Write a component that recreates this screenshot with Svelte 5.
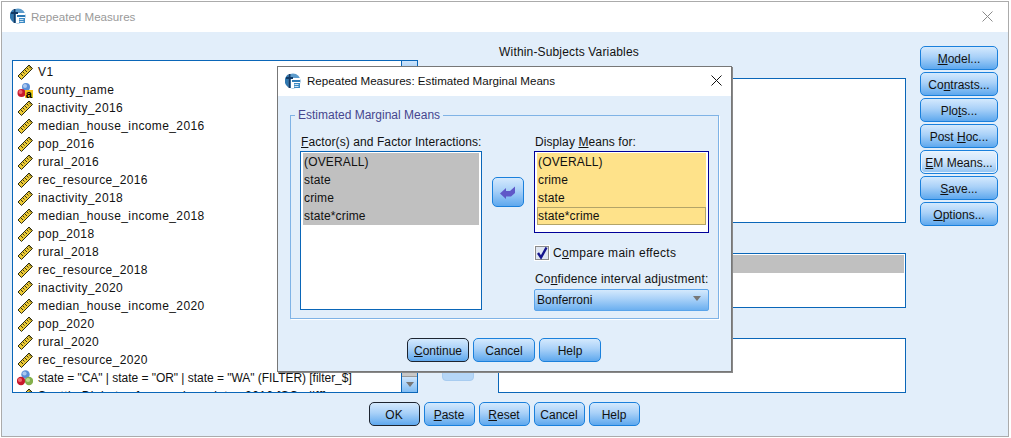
<script>
  const vars = [
    ["scale", "V1"],
    ["nominal", "county_name"],
    ["scale", "inactivity_2016"],
    ["scale", "median_house_income_2016"],
    ["scale", "pop_2016"],
    ["scale", "rural_2016"],
    ["scale", "rec_resource_2016"],
    ["scale", "inactivity_2018"],
    ["scale", "median_house_income_2018"],
    ["scale", "pop_2018"],
    ["scale", "rural_2018"],
    ["scale", "rec_resource_2018"],
    ["scale", "inactivity_2020"],
    ["scale", "median_house_income_2020"],
    ["scale", "pop_2020"],
    ["scale", "rural_2020"],
    ["scale", "rec_resource_2020"],
    ["filter", 'state = "CA" | state = "OR" | state = "WA" (FILTER) [filter_$]'],
    ["scale", "Seattle Diabetes from various dates 2016 [SC_diff]"]
  ];
  const side = [
    ["", "M", "odel..."],
    ["Co", "n", "trasts..."],
    ["Plo", "t", "s..."],
    ["Post ", "H", "oc..."],
    ["", "E", "M Means..."],
    ["", "S", "ave..."],
    ["", "O", "ptions..."]
  ];
</script>

{#snippet appIcon()}
  <svg class="ico" viewBox="0 0 16 16" width="16" height="16">
    <circle cx="8" cy="8" r="7.6" fill="#5d9ccc" />
    <path d="M3 1.600A7.600 7.600 0 0 0 3 14z" fill="#2f78b0" />
    <rect x="6" y="5" width="9" height="10" fill="#fff" />
    <rect x="7" y="7" width="8" height="2" fill="#2d7ab5" />
    <rect x="9" y="10" width="6" height="5" fill="#3c8ac4" />
    <path d="M9.500 11.500h4M9.500 13.500h4" stroke="#cfe4f4" />
    <path d="M4.500 1v14M1 5h7" stroke="#123a66" stroke-width="2" />
  </svg>
{/snippet}

{#snippet scale()}
  <svg class="ico" viewBox="0 0 16 16" width="16" height="16">
    <path d="M1 12L12 1l3.500 3.500-11 11z" fill="#ecc935" stroke="#2a2a10" />
    <path d="M4 10l2 2M6 8l1.500 1.500M8 6l2 2M10 4l1.500 1.500M12 2.500l2 2" stroke="#3a3410" />
  </svg>
{/snippet}

{#snippet ball(cx, cy, r, c, hi)}
  <circle {cx} {cy} {r} fill={c} />
  <circle cx={cx - 1} cy={cy - 1} r={r / 2} fill={hi} />
{/snippet}

{#snippet nominal()}
  <svg class="ico" viewBox="0 0 16 16" width="16" height="16">
    {@render ball(9, 5, 4, "#5b8fd8", "#a9c8f0")}
    {@render ball(4.500, 11, 4, "#c8182c", "#ee6a70")}
    <rect x="8" y="8" width="8" height="8" fill="#f2c21c" />
    <text x="12" y="15.500" class="badge">a</text>
  </svg>
{/snippet}

{#snippet filter()}
  <svg class="ico" viewBox="0 0 16 16" width="16" height="16">
    {@render ball(8.500, 4.500, 4.200, "#5b8fd8", "#a9c8f0")}
    {@render ball(4, 11, 4.200, "#c8182c", "#ee6a70")}
    {@render ball(12, 11, 4.200, "#84b04c", "#c0dc90")}
  </svg>
{/snippet}

{#snippet label(pre, key, post)}{pre}<u>{key}</u>{post}{/snippet}

<main class="win">
  <header class="title">
    {@render appIcon()}
    <span class="title-text">Repeated Measures</span>
    <svg class="close" viewBox="0 0 11 11" width="11" height="11"><path d="M.5.5l10 10M10.500.5l-10 10" stroke="#8a8a8a" fill="none" /></svg>
  </header>

  <div class="body">
    <div class="cols">
      <div class="varlist">
        <ul class="rows">
          {#each vars as [kind, name]}
            <li>
              {#if kind === "scale"}{@render scale()}{:else if kind === "nominal"}{@render nominal()}{:else}{@render filter()}{/if}
              <span class:tight={kind === "filter"}>{name}</span>
            </li>
          {/each}
        </ul>
        <div class="scroll">
          <div class="sb-btn"></div>
          <div class="sb-space"></div>
          <div class="sb-thumb"></div>
          <div class="sb-btn"><i class="tri"></i></div>
        </div>
      </div>

      <div class="move-col">
        <div class="move-off"></div>
      </div>

      <div class="boxes">
        <div class="heading">Within-Subjects Variables</div>
        <div class="box big"></div>
        <div class="box small"><div class="hl"></div></div>
        <div class="box small"></div>
      </div>

      <div class="side">
        {#each side as [a, b, c]}
          <button class="btn">{@render label(a, b, c)}</button>
        {/each}
      </div>
    </div>

    <div class="footer">
      <button class="btn wide def">OK</button>
      <button class="btn wide">{@render label("", "P", "aste")}</button>
      <button class="btn wide">{@render label("", "R", "eset")}</button>
      <button class="btn wide">Cancel</button>
      <button class="btn wide">Help</button>
    </div>
  </div>

  <section class="dlg">
    <header class="dlg-title">
      {@render appIcon()}
      <span>Repeated Measures: Estimated Marginal Means</span>
      <svg class="close" viewBox="0 0 11 11" width="11" height="11"><path d="M.5.5l10 10M10.500.5l-10 10" stroke="#111" fill="none" /></svg>
    </header>
    <div class="dlg-body">
      <fieldset class="group">
        <legend>Estimated Marginal Means</legend>
        <div class="left">
          <div class="cap">{@render label("", "F", "actor(s) and Factor Interactions:")}</div>
          <ul class="list factors">
            <li>(OVERALL)</li>
            <li>state</li>
            <li>crime</li>
            <li>state*crime</li>
          </ul>
        </div>
        <button class="move" aria-label="Move">
          <svg viewBox="0 0 16 15" width="16" height="15"><path d="M0 8.500L6 3v3h4l5-4.500V8l-4 3.500H6V14z" fill="#5f58c8" /></svg>
        </button>
        <div class="right">
          <div class="cap">{@render label("Display ", "M", "eans for:")}</div>
          <ul class="list means">
            <li>(OVERALL)</li>
            <li>crime</li>
            <li>state</li>
            <li class="cur">state*crime</li>
          </ul>
          <div class="check">
            <span class="cb">
              <svg viewBox="0 0 14 14" width="14" height="14"><path d="M3 7l3 4.500L11.500 1.500" fill="none" stroke="#14148c" stroke-width="2.400" /></svg>
            </span>
            <span class="check-text">{@render label("C", "o", "mpare main effects")}</span>
          </div>
          <div class="cap ci">{@render label("Co", "n", "fidence interval adjustment:")}</div>
          <div class="combo"><span>Bonferroni</span><i class="tri"></i></div>
        </div>
      </fieldset>
      <div class="dlg-actions">
        <button class="btn act def">{@render label("", "C", "ontinue")}</button>
        <button class="btn act">Cancel</button>
        <button class="btn act">Help</button>
      </div>
    </div>
  </section>
</main>

<style>
  :global(body) {
    background: #fff;
    font-family: "Liberation Sans", Arial, sans-serif;
    font-size: 12px;
    color: #111;
  }

  ul {
    list-style: none;
    margin: 0;
    padding: 0;
  }

  u {
    text-underline-offset: 1px;
  }

  .win {
    position: relative;
    box-sizing: border-box;
    width: 1008px;
    height: 436px;
    margin: 1px 0 0 1px;
    border: 1px solid #ababab;
    display: flex;
    flex-direction: column;
    overflow: hidden;
  }

  .title {
    box-sizing: border-box;
    height: 30px;
    flex: none;
    background: #fff;
    display: flex;
    align-items: center;
    padding: 0 15px 2px 8px;
    gap: 5px;
    color: #999;
    font-size: 11.6px;
  }

  .title-text {
    flex: 1;
  }

  .ico {
    flex: none;
    display: block;
  }

  .badge {
    font-size: 11px;
    font-weight: 700;
    text-anchor: middle;
    fill: #000;
    font-family: "Liberation Sans", sans-serif;
  }

  .body {
    flex: 1;
    background: #e2eefa;
    padding: 14px 10px 0;
  }

  .cols {
    display: flex;
    height: 347px;
  }

  .varlist {
    box-sizing: border-box;
    width: 406px;
    margin-top: 14px;
    height: 333px;
    border: 1.5px solid #0a66b8;
    background: #fff;
    display: flex;
    overflow: hidden;
  }

  .rows {
    flex: 1;
    min-width: 0;
    padding-left: 4px;
    margin-top: 1.5px;
  }

  .rows li {
    height: 18px;
    display: flex;
    align-items: center;
    gap: 5px;
    white-space: nowrap;
    overflow: hidden;
    letter-spacing: 0.38px;
  }

  .rows li .tight {
    letter-spacing: -0.03px;
  }

  .scroll {
    width: 15px;
    display: flex;
    flex-direction: column;
    border-left: 1px solid #0a66b8;
    background: #eef5fc;
  }

  .sb-btn {
    height: 15px;
    background: linear-gradient(#cfe5fb, #7fbcf4);
    display: flex;
    align-items: center;
    justify-content: center;
  }

  .sb-space {
    flex: 1;
  }

  .sb-thumb {
    height: 7px;
    background: #c8c8c8;
    border-bottom: 1px solid #999;
  }

  .tri {
    width: 0;
    height: 0;
    border: 4px solid transparent;
    border-top: 5px solid #777;
    border-bottom: 0;
  }

  .move-col {
    width: 80px;
    display: flex;
    justify-content: center;
    align-items: flex-end;
    padding-bottom: 12px;
    box-sizing: border-box;
  }

  .move-off {
    width: 32px;
    height: 30px;
    border-radius: 4px;
    background: #b5d6f7;
    border: 1px solid #a8ccf0;
    box-sizing: border-box;
  }

  .boxes {
    width: 408px;
    display: flex;
    flex-direction: column;
  }

  .heading {
    height: 12px;
    line-height: 12px;
    text-align: center;
    width: 142px;
    white-space: nowrap;
    letter-spacing: 0.16px;
  }

  .box {
    box-sizing: border-box;
    background: #fff;
    border: 1.5px solid #0a66b8;
    padding: 1px 1px;
  }

  .big {
    height: 146px;
    margin-top: 20px;
  }

  .small {
    height: 55px;
    margin-top: 30px;
  }

  .hl {
    height: 18px;
    background: #c0c0c0;
  }

  .side {
    width: 78px;
    margin-left: 14px;
    display: flex;
    flex-direction: column;
    gap: 2px;
  }

  .btn {
    box-sizing: border-box;
    height: 24px;
    padding: 1px 0 0;
    border: 1px solid #1a80dc;
    border-radius: 5px;
    background: linear-gradient(#d4e9fd, #a9d1f8 45%, #5ea8ee);
    font: inherit;
    color: #111;
    white-space: nowrap;
  }

  .side .btn:nth-child(5) {
    background: linear-gradient(#e6f2fe, #cfe4fa 50%, #8fc2f2);
    box-shadow: inset 0 0 0 1px #eaf4fe;
  }

  .def {
    border-color: #1c2430;
    border-width: 1.5px;
  }

  .footer {
    display: flex;
    justify-content: center;
    gap: 4px;
    margin: 9px 2px 0 0;
  }

  .wide {
    width: 51px;
  }

  .dlg {
    position: absolute;
    left: 275px;
    top: 64px;
    width: 455px;
    height: 306px;
    box-sizing: border-box;
    border: 1px solid #777;
    display: flex;
    flex-direction: column;
    box-shadow: 1px 1px 0 #888;
  }

  .dlg-title {
    box-sizing: border-box;
    height: 29px;
    flex: none;
    background: #fff;
    display: flex;
    align-items: center;
    gap: 6px;
    padding: 0 9px 2px 7px;
    color: #111;
    font-size: 11.6px;
  }

  .dlg-title span {
    flex: 1;
  }

  .dlg-body {
    flex: 1;
    background: #e2eefa;
    padding: 12px 13px 0 12px;
  }

  .group {
    box-sizing: border-box;
    height: 211px;
    margin: 0;
    padding: 13px 9px 0 9px;
    border: 1px solid #7fb3e6;
    box-shadow: 1px 1px 0 #fff;
    display: flex;
    align-items: flex-start;
  }

  legend {
    padding: 0 3px;
    margin-left: -5px;
    color: #46468e;
    line-height: 14px;
  }

  .left {
    width: 182px;
  }

  .right {
    width: 175px;
    margin-left: 10px;
  }

  .cap {
    height: 14px;
    line-height: 14px;
    margin: 0 0 2px 1px;
    white-space: nowrap;
    letter-spacing: 0.09px;
  }

  .list {
    box-sizing: border-box;
    background: #fff;
    padding: 1px 2px;
    letter-spacing: 0.15px;
  }

  .list li {
    height: 18px;
    line-height: 18px;
    padding-left: 1px;
  }

  .factors {
    height: 159px;
    border: 1.5px solid #0a66b8;
  }

  .factors li {
    background: #c0c0c0;
  }

  .means {
    height: 82px;
    border: 1.5px solid #000099;
  }

  .means li {
    background: #fee28a;
  }

  .means .cur {
    box-sizing: border-box;
    line-height: 16px;
    padding-left: 0;
    border: 1px solid #b3a468;
  }

  .move {
    box-sizing: border-box;
    width: 32px;
    height: 30px;
    margin: 42px 0 0 10px;
    padding: 0;
    border: 1px solid #1a80dc;
    border-radius: 5px;
    background: linear-gradient(#d4e9fd, #a9d1f8 45%, #5ea8ee);
    display: flex;
    align-items: center;
    justify-content: center;
  }

  .check {
    display: flex;
    align-items: center;
    gap: 4px;
    margin: 13px 0 0 1px;
    height: 14px;
    white-space: nowrap;
  }

  .check-text {
    letter-spacing: 0.3px;
  }

  .cb {
    box-sizing: border-box;
    width: 14px;
    height: 14px;
    background: #dfe6f2;
    border: 1px solid #8a8a8a;
    outline: 1px solid #fff;
    display: flex;
  }

  .cb svg {
    margin: -1px;
  }

  .ci {
    margin-top: 12px;
    margin-bottom: 3px;
    letter-spacing: 0.17px;
  }

  .combo {
    box-sizing: border-box;
    height: 22px;
    margin-top: 3px;
    border: 1px solid #5aa4ea;
    border-radius: 2px;
    background: linear-gradient(#d4e9fd, #a9d1f8 45%, #6cb0f0);
    display: flex;
    align-items: center;
    justify-content: space-between;
    padding: 0 7px 0 2px;
  }

  .combo .tri {
    margin-bottom: 4px;
  }

  .dlg-actions {
    display: flex;
    justify-content: center;
    gap: 4px;
    margin-top: 19px;
  }

  .act {
    width: 62px;
  }
</style>
